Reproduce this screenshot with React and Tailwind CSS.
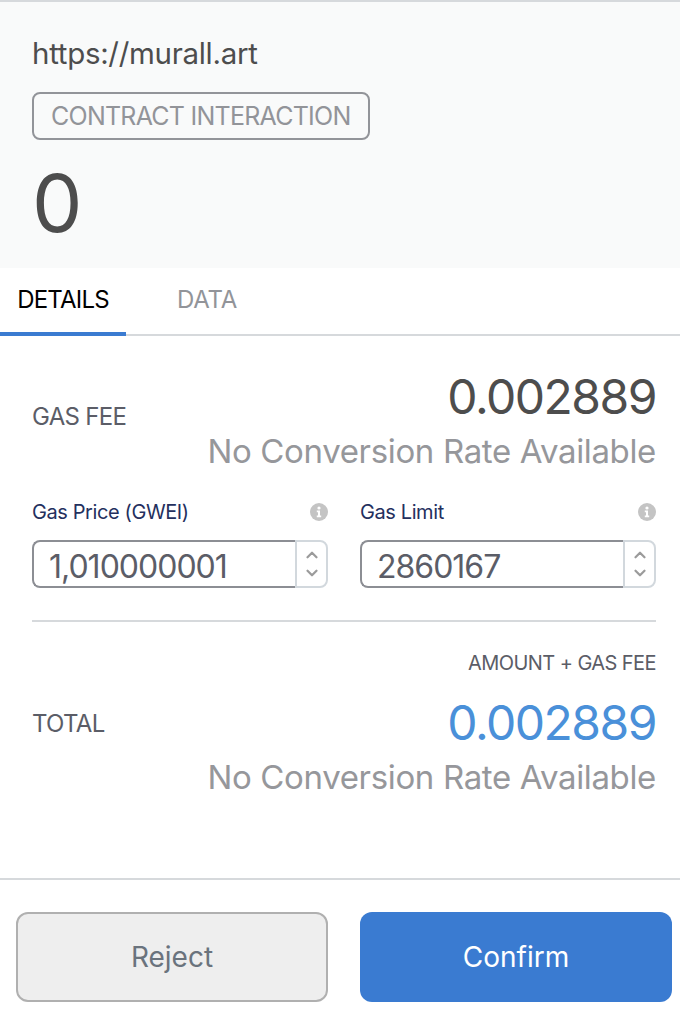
import React from 'react';
import { ChevronUp, ChevronDown } from 'lucide-react';

const font = "font-['Inter','Liberation_Sans',sans-serif]";

const InfoIcon = () => (
  <svg width="18" height="18" viewBox="0 0 18 18" className="block">
    <circle cx="9" cy="9" r="9" fill="#c4c4c4" />
    <circle cx="9" cy="5" r="1.6" fill="#fff" />
    <path d="M6.8 7.6h3.2v5h1.2v1.6H6.8v-1.6H8v-3.4H6.8z" fill="#fff" />
  </svg>
);

const GasInput = ({ label, value }) => (
  <div className="w-[296px]">
    <div className="flex items-center justify-between h-[22px]">
      <span className="text-[20px] text-[#24305e] tracking-[-0.4px]">{label}</span>
      <InfoIcon />
    </div>
    <div className="flex h-[48px] mt-[17px]">
      <div className="flex-1 flex items-center pl-[15px] pt-[6px] border-2 border-r-0 border-[#8c8e94] rounded-l-[8px] text-[32px] text-[#5b5d67] tracking-[-1px]">
        {value}
      </div>
      <div className="w-[33px] flex flex-col items-center justify-center border-2 border-[#d2d8dd] rounded-r-[8px] text-[#9b9b9b]">
        <ChevronUp size={18} strokeWidth={3} />
        <ChevronDown size={18} strokeWidth={3} />
      </div>
    </div>
  </div>
);

const FeeRow = ({ label, amount, amountColor, labelClass }) => (
  <div className="flex justify-between">
    <span className={`text-[24px] leading-[28px] text-[#5b5d67] tracking-[-0.7px] ${labelClass}`}>{label}</span>
    <div className="flex flex-col items-end">
      <span className={`text-[48px] leading-[50px] tracking-[-1.5px] ${amountColor}`}>{amount}</span>
      <span className="text-[33px] leading-[42px] mt-[8px] text-[#96979b] tracking-[-0.35px]">No Conversion Rate Available</span>
    </div>
  </div>
);

export default function App() {
  return (
    <div className={`w-[680px] h-[1014px] bg-white flex flex-col overflow-hidden ${font}`}>
      <div className="h-[268px] shrink-0 bg-[#f9fafa] border-t-2 border-[#d6d9dc] px-[32px] pt-[32px]">
        <div className="text-[29.5px] leading-[38px] text-[#4d4d4d] tracking-[-0.3px]">https://murall.art</div>
        <div className="inline-flex items-center h-[48px] mt-[20px] pt-[1px] px-[17px] border-2 border-[#929499] rounded-[8px] text-[25px] text-[#929499] tracking-[-0.75px]">
          CONTRACT INTERACTION
        </div>
        <div className="text-[80px] leading-[90px] text-[#4d4d4d] mt-[18px]">0</div>
      </div>

      <div className="flex h-[68px] shrink-0 border-b-2 border-[#d6d9dc]">
        <div className="w-[126px] flex items-center justify-center border-b-4 border-[#3a7bd1] -mb-[2px] text-[24px] text-black tracking-[-0.8px]">
          DETAILS
        </div>
        <div className="w-[162px] flex items-center justify-center pb-[2px] text-[24px] text-[#929499] tracking-[-0.2px]">
          DATA
        </div>
      </div>

      <div className="flex-1 pl-[32px] pr-[24px] pt-[36px]">
        <FeeRow label="GAS FEE" amount="0.002889" amountColor="text-[#4d4d4d]" labelClass="mt-[31px]" />
        <div className="flex gap-[32px] mt-[29px]">
          <GasInput label="Gas Price (GWEI)" value="1,010000001" />
          <GasInput label="Gas Limit" value="2860167" />
        </div>
        <div className="h-[2px] bg-[#d6d9dc] mt-[32px]" />
        <div className="text-right text-[20px] text-[#5b5d67] leading-[26px] mt-[28px] tracking-[-0.57px]">AMOUNT + GAS FEE</div>
        <div className="mt-[22px]">
          <FeeRow label="TOTAL" amount="0.002889" amountColor="text-[#4a90d9]" labelClass="mt-[12px]" />
        </div>
      </div>

      <div className="h-[136px] shrink-0 border-t-2 border-[#d6d9dc] flex gap-[32px] pl-[16px] pt-[32px]">
        <button className="w-[312px] h-[90px] bg-[#eeeeee] border-2 border-[#b0b0b0] rounded-[12px] text-[28px] text-[#6a737d]">
          Reject
        </button>
        <button className="w-[312px] h-[90px] bg-[#3a7bd1] rounded-[12px] text-[28px] text-white">
          Confirm
        </button>
      </div>
    </div>
  );
}
